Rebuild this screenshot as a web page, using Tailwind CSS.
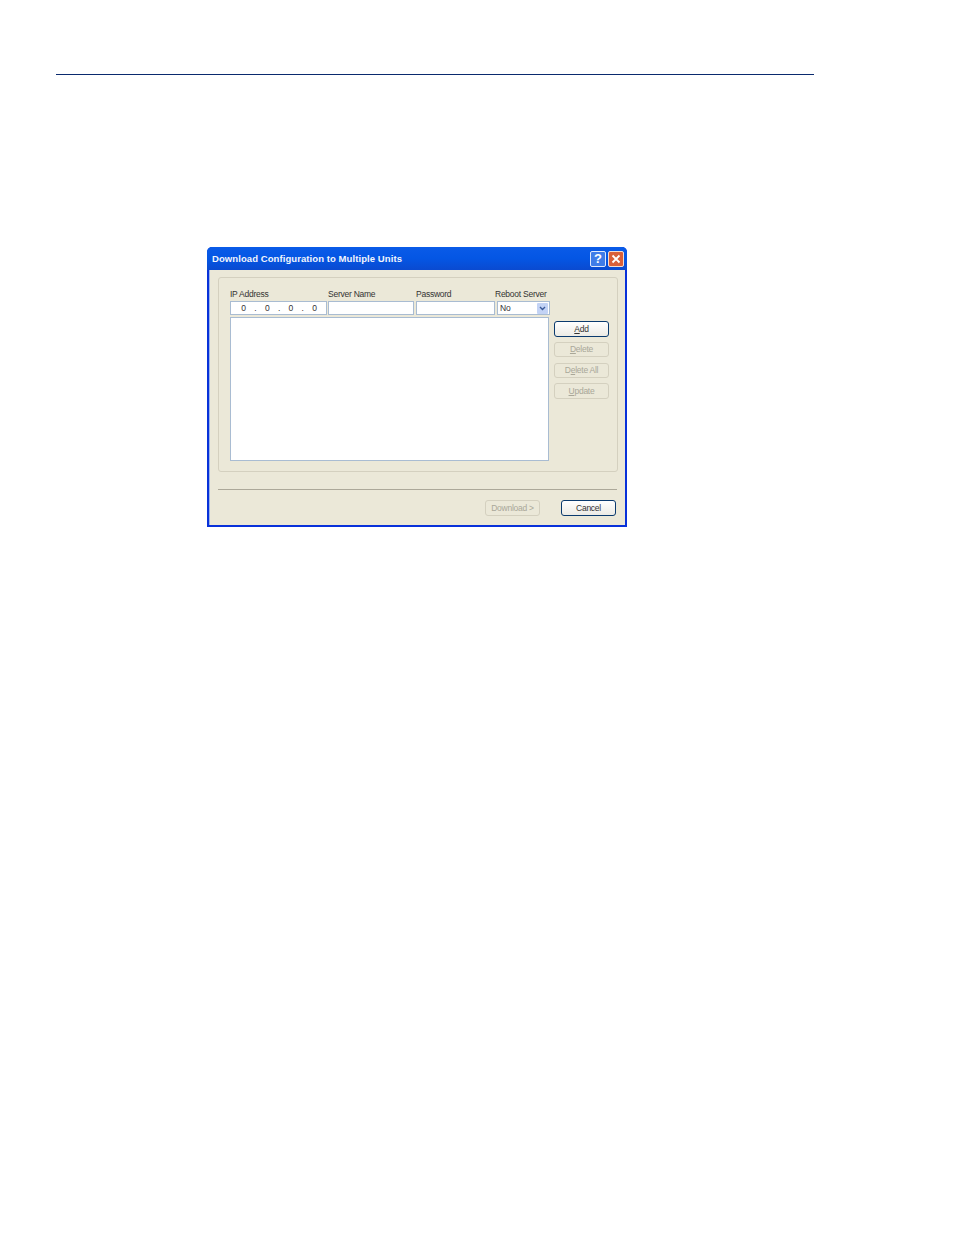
<!DOCTYPE html>
<html lang="en">
<head>
  <meta charset="UTF-8" />
  <title>Download Configuration to Multiple Units</title>
  <script src="https://cdn.jsdelivr.net/npm/@tailwindcss/browser@4"></script>
</head>
<body class="bg-white font-['Liberation_Sans',sans-serif]">
  <div class="h-[1235px] w-[954px] pt-[74px]">
    <!-- Top rule -->
    <div class="ml-[56px] h-px w-[758px] bg-[#0a2a6e]"></div>

    <!-- Dialog -->
    <div class="ml-[207px] mt-[172px] flex h-[280px] w-[420px] flex-col overflow-hidden rounded-t-[5px] bg-[#0831d9]">
      <!-- Title bar -->
      <div class="flex h-[23px] items-center justify-between bg-gradient-to-b from-[#0a5be8] via-[#0456e4] to-[#0a4ad0] pl-[5px] pr-[3px]">
        <span class="pt-[2px] text-[9.5px] font-bold tracking-[0.08px] text-[#f2f5fc]">Download Configuration to Multiple Units</span>
        <div class="flex gap-[2px]">
          <div class="flex h-[16px] w-[16px] items-center justify-center rounded-[2px] border border-[#dfe8fb] bg-[#3f7ce8] text-[13px] font-bold leading-none text-white">?</div>
          <div class="flex h-[16px] w-[16px] items-center justify-center rounded-[2px] border border-[#f3ddd2] bg-[#d9603a]">
            <svg width="10" height="10" viewBox="0 0 10 10"><path d="M1.500 1.500L8.500 8.500M8.500 1.500L1.500 8.500" stroke="#fff" stroke-width="1.800"/></svg>
          </div>
        </div>
      </div>

      <!-- Client area -->
      <div class="mx-[2px] mb-[2px] flex flex-1 flex-col border-l border-[#9db4e8] bg-[#ebe8d8] pl-[8px] pr-[7px] pt-[7px] text-[8.5px] leading-none tracking-[-0.25px] text-[#333]">
        <!-- Group box -->
        <div class="flex h-[195px] gap-[4px] rounded-[3px] border border-[#d4d0bf] pl-[11px] pt-[10px]">
          <div class="w-[320px]">
            <div class="flex h-[13px] items-center">
              <span class="w-[98px]">IP Address</span>
              <span class="w-[88px]">Server Name</span>
              <span class="w-[79px]">Password</span>
              <span>Reboot Server</span>
            </div>
            <div class="flex h-[14px]">
              <div class="flex w-[97px] items-center justify-around border border-[#a9bcd2] bg-white pl-[6px] pr-[5px]">
                <span>0</span><span>.</span><span>0</span><span>.</span><span>0</span><span>.</span><span>0</span>
              </div>
              <div class="ml-px w-[86px] border border-[#a9bcd2] bg-white"></div>
              <div class="ml-[2px] w-[79px] border border-[#a9bcd2] bg-white"></div>
              <div class="ml-[2px] flex w-[53px] shrink-0 items-center justify-between border border-[#a9bcd2] bg-white pl-[2px] pr-px">
                <span>No</span>
                <div class="flex h-[11px] w-[11px] items-center justify-center rounded-[1px] bg-[#c3d3f5]">
                  <svg width="7" height="5" viewBox="0 0 7 5"><path d="M1 1L3.500 3.500L6 1" fill="none" stroke="#3a5a9a" stroke-width="1.400"/></svg>
                </div>
              </div>
            </div>
            <!-- Server list -->
            <div class="mt-[2px] h-[144px] w-[319px] border border-[#a9bcd2] bg-white"></div>
          </div>

          <!-- Side buttons -->
          <div class="flex w-[55px] flex-col gap-[5.250px] pt-[33px]">
            <button class="h-[15.500px] rounded-[3px] border border-[#0a3a6e] bg-gradient-to-b from-white to-[#ecebe5]"><u>A</u>dd</button>
            <button class="h-[15.500px] rounded-[3px] border border-[#d4d0bf] text-[#a9a798]"><u>D</u>elete</button>
            <button class="h-[15.500px] rounded-[3px] border border-[#d4d0bf] text-[#a9a798]">D<u>e</u>lete All</button>
            <button class="h-[15.500px] rounded-[3px] border border-[#d4d0bf] text-[#a9a798]"><u>U</u>pdate</button>
          </div>
        </div>

        <!-- Separator -->
        <div class="mr-px mt-[17px] h-px bg-[#aca899]"></div>

        <!-- Footer buttons -->
        <div class="mt-[10px] flex w-[398px] justify-end gap-[21px]">
          <button class="h-[16px] w-[55px] rounded-[3px] border border-[#d4d0bf] pt-px text-[#a9a798]">Download &gt;</button>
          <button class="h-[16px] w-[55px] rounded-[3px] border border-[#0a3a6e] bg-gradient-to-b from-white to-[#ecebe5] pt-px">Cancel</button>
        </div>
      </div>
    </div>
  </div>
</body>
</html>
